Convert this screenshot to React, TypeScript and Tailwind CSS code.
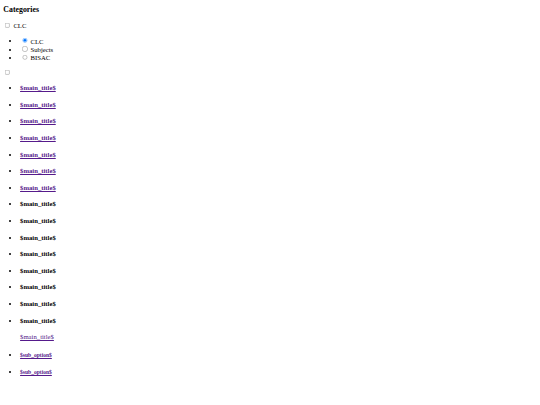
import React from 'react'

// the reference is a plain, unstyled browser page shrunk to ~42%
const linkCls = 'text-[#551a8b] underline'

export default function App() {
  const mains = Array.from({ length: 15 }, (_, i) => i < 7)

  return (
    <div className="[zoom:0.4187] min-h-screen bg-white px-2 pt-[11px] pb-2 text-base leading-[1.15] text-black font-['Liberation_Serif','Times_New_Roman',serif]">
      <h3 className="text-[1.17em] font-bold mb-[1em]">Categories</h3>

      <div>
        <input type="checkbox" className="m-[3px_3px_3px_4px]" /> CLC
      </div>

      <ul className="list-disc pl-10 my-4">
        <li>
          <input type="radio" name="cat" defaultChecked className="m-[3px_3px_0_5px]" /> CLC
        </li>
        <li>
          <input type="radio" name="cat" className="m-[3px_3px_0_5px]" /> Subjects
        </li>
        <li>
          <input type="radio" name="cat" className="m-[3px_3px_0_5px]" /> BISAC
        </li>
      </ul>

      <div>
        <input type="checkbox" className="m-[3px_3px_3px_4px]" />
      </div>

      <ul className="list-disc pl-10 my-4">
        {mains.map((isLink, i) => (
          <li key={i}>
            <h4 className={i === 0 ? 'font-bold mt-[1.1em] mb-[1.33em]' : 'font-bold my-[1.33em]'}>
              {isLink ? <a href="#" className={linkCls}>$main_title$</a> : '$main_title$'}
            </h4>
          </li>
        ))}
      </ul>

      <div className="pl-10">
        <a href="#" className={linkCls}>$main_title$</a>
      </div>

      <ul className="list-disc pl-10 my-4">
        {[0, 1].map((i) => (
          <li key={i}>
            <h5 className="text-[0.83em] font-bold my-[1.8em]">
              <a href="#" className={linkCls}>$sub_option$</a>
            </h5>
          </li>
        ))}
      </ul>
    </div>
  )
}
